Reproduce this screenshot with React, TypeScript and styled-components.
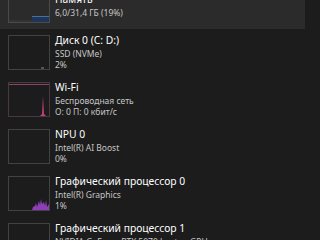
import React from 'react';
import styled, { createGlobalStyle } from 'styled-components';

const GlobalStyle = createGlobalStyle`
  html, body {
    margin: 0;
    padding: 0;
    background: #1c1c1c;
    overflow: hidden;
  }
  body {
    width: 320px;
    height: 240px;
    font-family: "Noto Sans", "Open Sans", sans-serif;
  }
`;

const Panel = styled.div`
  width: 320px;
  height: 240px;
  overflow: hidden;
  background: #1c1c1c;
`;

// the list is scrolled a little, so the first row is cut at the top
const List = styled.div`
  display: flex;
  flex-direction: column;
  width: 305px;
  margin-top: -18px;
`;

const Row = styled.div<{ $selected?: boolean }>`
  display: flex;
  align-items: flex-start;
  gap: 5px;
  height: 47px;
  padding: 6px 0 0 8px;
  box-sizing: border-box;
  background: ${(p) => (p.$selected ? '#2b2b2b' : 'transparent')};
`;

const Thumb = styled.div<{ $border: string }>`
  width: 42px;
  height: 35px;
  flex: none;
  box-sizing: border-box;
  border: 1px solid ${(p) => p.$border};
  position: relative;
  overflow: hidden;

  svg {
    position: absolute;
    left: 0;
    top: 0;
  }
`;

const Info = styled.div`
  display: flex;
  flex-direction: column;
  justify-content: center;
  height: 35px;
  padding-bottom: 2px;
  box-sizing: border-box;
  min-width: 0;
`;

const Title = styled.div`
  font-size: 10.3px;
  line-height: 15px;
  color: #ffffff;
  white-space: nowrap;
`;

const Sub = styled.div`
  font-size: 8.5px;
  line-height: 11px;
  color: #c6c6c6;
  white-space: nowrap;
`;

type Item = {
  title: string;
  lines: string[];
  border: string;
  graph?: React.ReactNode;
  selected?: boolean;
};

const items: Item[] = [
  {
    title: 'Память',
    lines: ['6,0/31,4 ГБ (19%)'],
    border: '#4a4a4a',
    selected: true,
    graph: (
      <svg width="40" height="33" viewBox="0 0 40 33">
        <line x1="0" y1="32" x2="40" y2="32" stroke="#3c3c3c" strokeWidth="1" />
        <rect x="23" y="27" width="17" height="6" fill="#1f3557" />
        <rect x="23" y="27" width="17" height="1" fill="#4e6f9e" />
      </svg>
    ),
  },
  {
    title: 'Диск 0 (C: D:)',
    lines: ['SSD (NVMe)', '2%'],
    border: '#424242',
    graph: (
      <svg width="40" height="33" viewBox="0 0 40 33">
        <rect x="32" y="31" width="3" height="2" fill="#4d5a45" />
      </svg>
    ),
  },
  {
    title: 'Wi-Fi',
    lines: ['Беспроводная сеть', 'О: 0 П: 0 кбит/с'],
    border: '#4a3840',
    graph: (
      <svg width="40" height="33" viewBox="0 0 40 33">
        <line x1="0" y1="1.5" x2="40" y2="1.5" stroke="#8a4565" strokeWidth="1" />
        <path d="M31 33 L33 31 L34 13 L35 31 L37 33 Z" fill="#c0407a" />
      </svg>
    ),
  },
  {
    title: 'NPU 0',
    lines: ['Intel(R) AI Boost', '0%'],
    border: '#424242',
  },
  {
    title: 'Графический процессор 0',
    lines: ['Intel(R) Graphics', '1%'],
    border: '#424242',
    graph: (
      <svg width="40" height="33" viewBox="0 0 40 33">
        <path
          d="M23 33 L24 30 L26 29 L27 26 L28 30 L30 24 L31 28 L32 22 L33 27 L35 25 L36 29 L37 23 L38 30 L40 27 L40 33 Z"
          fill="#8e3fb8"
        />
      </svg>
    ),
  },
  {
    title: 'Графический процессор 1',
    lines: ['NVIDIA GeForce RTX 5070 Laptop GPU', '0%'],
    border: '#424242',
  },
];

export default function App() {
  return (
    <Panel>
      <GlobalStyle />
      <List>
        {items.map((it) => (
          <Row key={it.title} $selected={it.selected}>
            <Thumb $border={it.border}>{it.graph}</Thumb>
            <Info>
              <Title>{it.title}</Title>
              {it.lines.map((l) => (
                <Sub key={l}>{l}</Sub>
              ))}
            </Info>
          </Row>
        ))}
      </List>
    </Panel>
  );
}
